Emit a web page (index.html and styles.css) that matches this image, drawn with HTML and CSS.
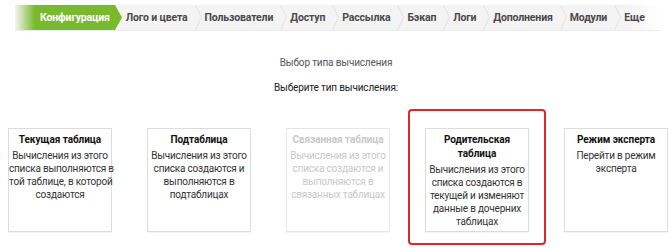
FILE: index.html
```html
<!DOCTYPE html>
<html lang="ru">
<head>
<meta charset="utf-8">
<link rel="stylesheet" href="styles.css">
</head>
<body>
<nav class="steps">
  <span class="step active">Конфигурация</span><svg class="tip" width="7" height="25" viewBox="0 0 7 25"><path d="M0 0 L7 12.5 L0 25 Z" fill="#79b92c"/></svg>
  <span class="step first">Лого и цвета</span><svg class="sep" width="7" height="25" viewBox="0 0 7 25"><path d="M0.5 0 L6.5 12.5 L0.5 25" stroke="#e0e0e0" stroke-width="1" fill="none"/></svg>
  <span class="step">Пользователи</span><svg class="sep" width="7" height="25" viewBox="0 0 7 25"><path d="M0.5 0 L6.5 12.5 L0.5 25" stroke="#e0e0e0" stroke-width="1" fill="none"/></svg>
  <span class="step">Доступ</span><svg class="sep" width="7" height="25" viewBox="0 0 7 25"><path d="M0.5 0 L6.5 12.5 L0.5 25" stroke="#e0e0e0" stroke-width="1" fill="none"/></svg>
  <span class="step">Рассылка</span><svg class="sep" width="7" height="25" viewBox="0 0 7 25"><path d="M0.5 0 L6.5 12.5 L0.5 25" stroke="#e0e0e0" stroke-width="1" fill="none"/></svg>
  <span class="step">Бэкап</span><svg class="sep" width="7" height="25" viewBox="0 0 7 25"><path d="M0.5 0 L6.5 12.5 L0.5 25" stroke="#e0e0e0" stroke-width="1" fill="none"/></svg>
  <span class="step">Логи</span><svg class="sep" width="7" height="25" viewBox="0 0 7 25"><path d="M0.5 0 L6.5 12.5 L0.5 25" stroke="#e0e0e0" stroke-width="1" fill="none"/></svg>
  <span class="step">Дополнения</span><svg class="sep" width="7" height="25" viewBox="0 0 7 25"><path d="M0.5 0 L6.5 12.5 L0.5 25" stroke="#e0e0e0" stroke-width="1" fill="none"/></svg>
  <span class="step">Модули</span><svg class="sep" width="7" height="25" viewBox="0 0 7 25"><path d="M0.5 0 L6.5 12.5 L0.5 25" stroke="#e0e0e0" stroke-width="1" fill="none"/></svg>
  <span class="step">Еще</span>
</nav>

<h2 class="title">Выбор типа вычисления</h2>
<p class="prompt">Выберите тип вычисления:</p>

<div class="cards">
  <div class="card">
    <div class="card-title">Текущая таблица</div>
    <div class="card-text">Вычисления из этого<br>списка выполняются в<br>той таблице, в которой<br>создаются</div>
  </div>
  <div class="card">
    <div class="card-title">Подтаблица</div>
    <div class="card-text">Вычисления из этого<br>списка создаются и<br>выполняются в<br>подтаблицах</div>
  </div>
  <div class="card disabled">
    <div class="card-title">Связанная таблица</div>
    <div class="card-text">Вычисления из этого<br>списка создаются и<br>выполняются в<br>связанных таблицах</div>
  </div>
  <div class="card highlighted">
    <div class="card-title">Родительская<br>таблица</div>
    <div class="card-text">Вычисления из этого<br>списка создаются в<br>текущей и изменяют<br>данные в дочерних<br>таблицах</div>
  </div>
  <div class="card">
    <div class="card-title">Режим эксперта</div>
    <div class="card-text">Перейти в режим<br>эксперта</div>
  </div>
</div>
</body>
</html>
```

FILE: styles.css
```css
* { box-sizing: border-box; }

body {
  margin: 0;
  width: 672px;
  height: 249px;
  overflow: hidden;
  background: #fff;
  font-family: Roboto, "Liberation Sans", sans-serif;
  color: #333;
}

.steps {
  display: flex;
  align-items: center;
  margin: 5px 12px 0 15px;
  height: 25px;
  background: linear-gradient(to right, #f4f4f4 0, #f4f4f4 calc(100% - 30px), rgba(244,244,244,0) 100%);
  box-shadow: 0 1px 0 #ececec;
}

.step {
  height: 25px;
  line-height: 25px;
  font-size: 10.5px;
  font-weight: 700;
  letter-spacing: -0.15px;
  color: #4a4a4a;
  padding: 0 7px 0 3px;
  white-space: nowrap;
}

.step.first { padding-left: 4px; }

.step.active {
  color: #fff;
  padding: 0 5px 0 25px;
  background: linear-gradient(to right, rgba(121,185,44,0) 0, #79b92c 20px);
}

.tip, .sep { display: block; flex: none; }

.title {
  margin: 25px 0 0;
  text-align: center;
  font-size: 10px;
  font-weight: 400;
  letter-spacing: -0.15px;
  line-height: 15px;
  color: #555;
}

.prompt {
  margin: 10px 0 0;
  text-align: center;
  font-size: 10px;
  letter-spacing: -0.15px;
  line-height: 15px;
  color: #222;
}

.cards {
  display: flex;
  gap: 35px;
  margin: 33px 0 0 8px;
}

.card {
  position: relative;
  width: 104px;
  height: 104px;
  flex: none;
  border: 1px solid #dcdcdc;
  box-shadow: 0 1px 1px rgba(0,0,0,0.04);
  padding: 4px 0 0;
  text-align: center;
  background: #fff;
}

.card-title {
  font-size: 10px;
  font-weight: 700;
  letter-spacing: -0.05px;
  line-height: 14px;
  color: #111;
  margin-bottom: 2px;
}

.card-text {
  font-size: 10px;
  letter-spacing: -0.2px;
  line-height: 13px;
  color: #333;
  white-space: nowrap;
}

.card.disabled .card-title,
.card.disabled .card-text { color: #c8c8c8; }
.card.disabled { border-color: #e6e6e6; }

.card.highlighted::before {
  content: "";
  position: absolute;
  top: -20px;
  left: -18px;
  right: -18px;
  bottom: -14px;
  border: 2px solid #e0262b;
  border-radius: 4px;
}
```
